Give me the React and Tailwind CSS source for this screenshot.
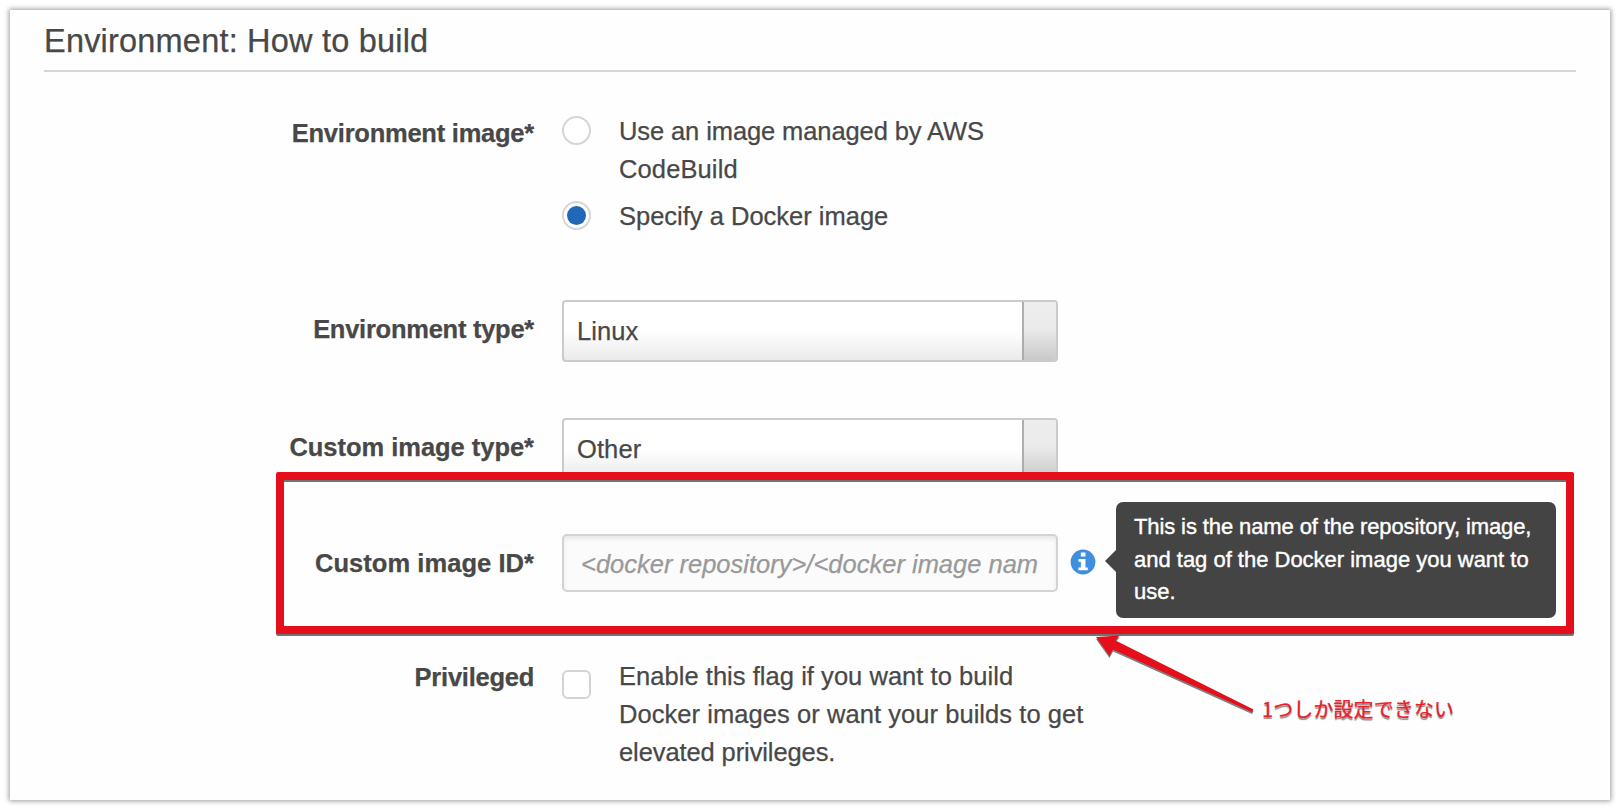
function Label({ children, className = "" }) {
  return (
    <div className={`w-[490px] shrink-0 text-right text-[25.5px] font-bold leading-[38px] ${className}`}>
      {children}
    </div>
  );
}

function Select({ value }) {
  return (
    <div className="flex h-[62px] w-[496px] overflow-hidden rounded-[4px] border-2 border-[#cbcbcb] bg-[linear-gradient(#fff_0%,#fff_50%,#eaeaea_100%)]">
      <span className="flex-1 pl-[13px] pt-[10px] leading-[38px] tracking-[0.1px]">{value}</span>
      <span className="w-[34px] border-l-2 border-[#adadad] bg-[linear-gradient(#ededed_0%,#ebebeb_45%,#c9c9c9_100%)]" />
    </div>
  );
}

function Radio({ checked, className = "" }) {
  return (
    <span className={`flex h-[29px] w-[29px] shrink-0 items-center justify-center rounded-full border-2 border-[#d6d6d6] bg-white ${className}`}>
      {checked && <span className="h-[19px] w-[19px] rounded-full bg-[#1f69b6]" />}
    </span>
  );
}

function InfoIcon() {
  return (
    <svg className="ml-3 mt-[15px] shrink-0" width="26" height="26" viewBox="0 0 26 26">
      <circle cx="13" cy="13" r="12.4" fill="#3f8fde" />
      <path d="M10.9 3.6h4.6v4h-4.6zM8.4 9.9h7.1v8.5h2.3v2.8H8.4v-2.8h2.5v-5.7H8.4z" fill="#fff" />
    </svg>
  );
}

export default function App() {
  return (
    <div className="h-[810px] w-[1620px] overflow-hidden bg-white p-[10px] font-['Liberation_Sans',Arial,sans-serif] text-[#484848]">
      <section className="relative h-[790px] w-[1600px] bg-[#fefefe] pl-[34px] pr-[34px] text-[25.5px] shadow-[0_0_5px_1px_rgba(0,0,0,0.4)] [-webkit-text-stroke:0.25px_currentColor]">
        <h1 className="h-[62px] border-b-2 border-[#d6d6d6] pt-[12px] text-[32.5px] leading-[38px] tracking-[0.2px]">
          Environment: How to build
        </h1>

        <div className="mt-[40px] flex h-[188px] gap-[28px]">
          <Label className="pt-[2px] tracking-[-0.24px]">Environment image*</Label>
          <div className="flex flex-col gap-[9px]">
            <div className="flex gap-[28px]">
              <Radio className="mt-[4px]" />
              <p className="leading-[38px]">
                <span className="tracking-[-0.1px]">Use an image managed by AWS</span>
                <br />
                <span className="tracking-[0.12px]">CodeBuild</span>
              </p>
            </div>
            <div className="flex gap-[28px]">
              <Radio checked className="mt-[4px]" />
              <p className="leading-[38px]">Specify a Docker image</p>
            </div>
          </div>
        </div>

        <div className="flex gap-[28px]">
          <Label className="pt-[10px] tracking-[-0.26px]">Environment type*</Label>
          <Select value="Linux" />
        </div>

        <div className="mt-[56px] flex gap-[28px]">
          <Label className="pt-[10px] tracking-[-0.03px]">Custom image type*</Label>
          <Select value="Other" />
        </div>

        <div className="mt-[54px] flex">
          <Label className="mr-[28px] pt-[10px] tracking-[0.05px]">Custom image ID*</Label>
          <div className="h-[58px] w-[496px] shrink-0 rounded-[5px] border-2 border-[#d3d3d3] bg-[#fbfbfb] px-[17px] pt-[9px] shadow-[inset_0_3px_4px_rgba(0,0,0,0.08)]">
            <div className="overflow-hidden whitespace-nowrap italic leading-[38px] text-[#999]">
              &lt;docker repository&gt;/&lt;docker image nam
            </div>
          </div>
          <InfoIcon />
        </div>

        <div className="mt-[65px] flex gap-[28px]">
          <Label className="pt-[1px] tracking-[-0.25px]">Privileged</Label>
          <div className="flex gap-[28px]">
            <span className="mt-[13px] h-[29px] w-[29px] shrink-0 rounded-[6px] border-2 border-[#d3d3d3] bg-white" />
            <p className="whitespace-nowrap leading-[38px]">
              <span className="tracking-[0.04px]">Enable this flag if you want to build</span>
              <br />
              <span className="tracking-[0.06px]">Docker images or want your builds to get</span>
              <br />
              <span className="tracking-[-0.1px]">elevated privileges.</span>
            </p>
          </div>
        </div>

        <div className="absolute left-[1106px] top-[492px] h-[116px] w-[440px] whitespace-nowrap rounded-[7px] bg-[#444] pl-[18px] pt-[9px] text-[22px] leading-[32.5px] text-white [-webkit-text-stroke:0.4px_white]">
          <svg className="absolute -left-[11px] top-[47px]" width="12" height="24" viewBox="0 0 12 24">
            <path d="M12 0v24L0 12z" fill="#444" />
          </svg>
          <span className="tracking-[-0.11px]">This is the name of the repository, image,</span>
          <br />
          <span className="tracking-[-0.01px]">and tag of the Docker image you want to</span>
          <br />
          use.
        </div>

        <div className="absolute left-[266px] top-[462px] h-[162px] w-[1298px] rounded-[2px] border-8 border-[#e40f1a] [filter:drop-shadow(0_2px_0.5px_rgba(0,0,0,0.55))]" />

        <svg
          className="absolute left-[1080px] top-[620px] [filter:drop-shadow(0_2px_0.7px_rgba(0,0,0,0.5))]"
          width="170"
          height="90"
          viewBox="0 0 170 90"
        >
          <path d="M6 7 29.5 5.5 25.5 10.5 163.5 79.5 162 82 23 19.5 19.5 26z" fill="#e40f1a" />
        </svg>

        <div className="absolute left-[1252px] top-[684px] whitespace-nowrap font-['Noto_Sans_CJK_JP',sans-serif] text-[20px] leading-[30px] tracking-[0.1px] text-[#ee2029] [text-shadow:0_2px_1px_rgba(0,0,0,0.45)]">
          1つしか設定できない
        </div>
      </section>
    </div>
  );
}
